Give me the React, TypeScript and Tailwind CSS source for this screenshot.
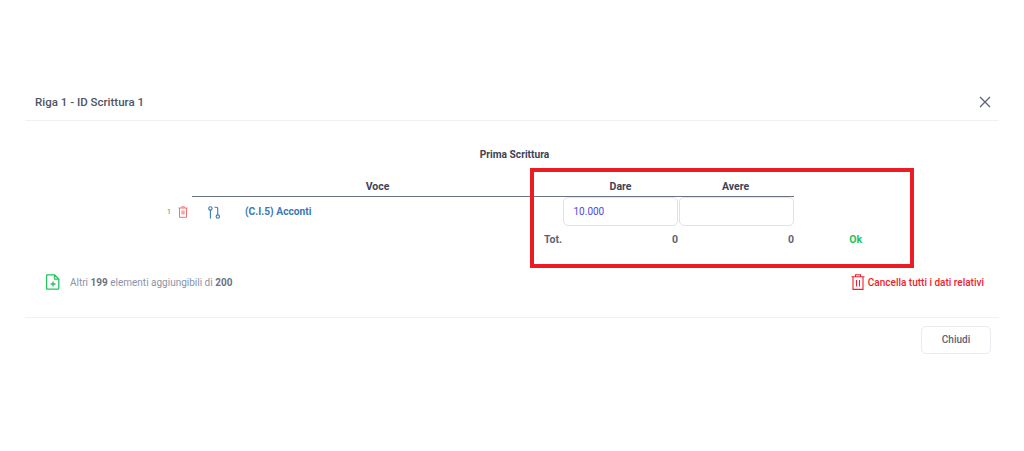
export default function App() {
  return (
    <div className="relative w-[1024px] h-[451px] bg-white overflow-hidden font-['Roboto',sans-serif] text-[#3f4254]">
      <div className="mx-[25px] pt-[84px]">
        <div className="h-[37px] border-b border-[#f1f1f4] flex items-center justify-between pl-[10px] pr-[8px]">
          <span className="text-[11.5px] font-medium text-[#4b5563] pt-[1px]">Riga 1 - ID Scrittura 1</span>
          <svg width="12" height="12" viewBox="0 0 12 12" fill="none" stroke="#5e6278" strokeWidth="1.3"><path d="M1 1l10 10M11 1L1 11" /></svg>
        </div>

        <div className="h-[197px] border-b border-[#f1f1f4] flex flex-col">
          <div className="mt-[28px] pl-[5px] text-center text-[10.2px] font-bold leading-[12px] text-[#3f4254]">Prima Scrittura</div>

          <div className="mt-[19px] ml-[142px] flex flex-col">
            <div className="ml-[25px] w-[602px] h-[17px] flex border-b border-[#6b7280] text-[10.5px] font-bold leading-[14px] text-center">
              <div className="w-[371px]">Voce</div>
              <div className="w-[115px]">Dare</div>
              <div className="w-[115px]">Avere</div>
            </div>

            <div className="flex items-start h-[30px]">
              <div className="w-[41px] h-[30px] flex items-center gap-[7px]">
                <span className="text-[7px] text-[#6b7280] w-[4px]">1</span>
                <svg width="10" height="12" viewBox="0 0 10 12" fill="none" stroke="#f87171" strokeWidth="1"><path d="M3.5 1.5V.8h3v.7M.5 2h9M1.5 2v9.3h7V2" /><rect x="3.3" y="4.5" width="3.4" height="4" fill="#fca5a5" stroke="none" /></svg>
              </div>
              <div className="w-[37px] h-[30px] flex items-center">
                <svg width="13" height="13" viewBox="0 0 13 13" fill="none" stroke="#3b78b5" strokeWidth="1.1"><circle cx="2.4" cy="2.4" r="1.7" /><path d="M2.4 4.1V12.5M6.5 1.2h2.2a1 1 0 0 1 1 1v6.6" /><circle cx="9.8" cy="10.6" r="1.7" /></svg>
              </div>
              <div className="w-[318px] h-[30px] flex items-center text-[10.25px] font-bold text-[#3b78b5]">(C.I.5) Acconti</div>
              <div className="w-[115px] h-[29px] mr-[1px] border border-[#dde3ec] rounded-[5px] flex items-center pl-[9.5px] text-[10px] text-[#4f46e5]">10.000</div>
              <div className="w-[115px] h-[29px] border border-[#dde3ec] rounded-[5px]" />
            </div>

            <div className="flex h-[14px] mt-[6px] items-center text-[10.5px] font-bold leading-[14px] text-[#5e6278]">
              <div className="w-[377px]" />
              <div className="w-[134px] flex justify-between"><span>Tot.</span><span>0</span></div>
              <div className="w-[116px] text-right">0</div>
              <div className="w-[68px] text-right font-bold text-[#22c55e]">Ok</div>
            </div>
          </div>

          <div className="mt-[27px] flex items-center justify-between pl-[21px] pr-[15px]">
            <div className="flex items-center gap-[10px] text-[10px] text-[#8a93a6]">
              <svg width="14" height="16" viewBox="0 0 14 16" fill="none" stroke="#22c55e" strokeWidth="1.3" strokeLinejoin="round"><path d="M1.2.8h7.3l4.3 4.3v9.1a1 1 0 0 1-1 1H1.2a.6.6 0 0 1-.6-.6V1.4a.6.6 0 0 1 .6-.6zM8.5.8v4.3h4.3M7 7.5v5M4.5 10h5" /></svg>
              <span>Altri <b className="font-bold text-[#6b7280]">199</b> elementi aggiungibili di <b className="font-bold text-[#6b7280]">200</b></span>
            </div>
            <div className="flex items-center gap-[3px] text-[10px] font-medium text-[#f1202e]">
              <svg width="14" height="16" viewBox="0 0 14 16" fill="none" stroke="#f1202e" strokeWidth="1.1"><path d="M4.5 2.5V.8h5v1.7M.5 2.8h13M2 2.8v12.6h10V2.8M5.5 6v6.5M8.5 6v6.5" /></svg>
              <span>Cancella tutti i dati relativi</span>
            </div>
          </div>
        </div>

        <div className="flex justify-end pt-[8px] pr-[8px]">
          <button className="w-[70px] h-[28px] pb-[1px] border border-[#e8ebf0] rounded-[5px] text-[10px] font-medium text-[#5e6278]">Chiudi</button>
        </div>
      </div>

      <div className="absolute left-[530px] top-[168px] w-[384px] h-[100px] border-[4px] border-[#ed1c24]" />
    </div>
  );
}
